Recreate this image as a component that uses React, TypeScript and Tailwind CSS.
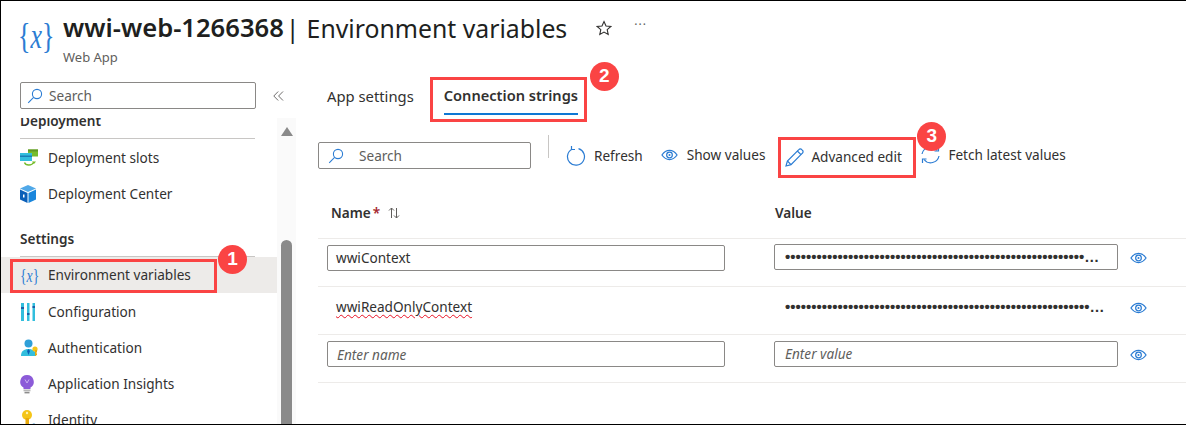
import { ReactNode } from "react";

const blue = "#2b7cd3";

const SearchIcon = () => (
  <svg width="16" height="16" viewBox="0 0 16 16" fill="none" stroke={blue} strokeWidth="1.1">
    <circle cx="10" cy="6" r="4.6" />
    <path d="M6.6 9.4 1.2 14.8" />
  </svg>
);

const EyeIcon = () => (
  <svg width="17" height="12" viewBox="0 0 18 12" fill="none" stroke={blue} strokeWidth="1.3">
    <path d="M1 6c2-3 4.800-4.800 8-4.800S15 3 17 6c-2 3-4.800 4.800-8 4.800S3 9 1 6Z" />
    <circle cx="9" cy="6" r="3" />
    <circle cx="9" cy="6" r="1.100" fill={blue} stroke="none" />
  </svg>
);

const RefreshIcon = () => (
  <svg width="20" height="22" viewBox="0 0 20 22" fill="none" stroke={blue} strokeWidth="1.2">
    <path d="M6 4.200a8.500 8.500 0 1 0 6.500-.6" />
    <path d="M5.500 1v3.500H9" />
  </svg>
);

const PencilIcon = () => (
  <svg width="19" height="19" viewBox="0 0 19 19" fill="none" stroke={blue} strokeWidth="1.2">
    <path d="M1 18l1.400-5L13.800 1.600a2 2 0 0 1 3 0l.6.6a2 2 0 0 1 0 3L6 16.600 1 18Z" />
    <path d="M2.400 13 6 16.600M12.300 3l3.700 3.700" />
  </svg>
);

const SyncIcon = () => (
  <svg width="19" height="18" viewBox="0 0 19 18" fill="none" stroke={blue} strokeWidth="1.2">
    <path d="M1 8a8.500 8.500 0 0 1 15-3.500" />
    <path d="M17.500 1v4h-4" />
    <path d="M18 10a8.500 8.500 0 0 1-15 3.500" />
    <path d="M1.500 17v-4h4" />
  </svg>
);

const SlotsIcon = () => (
  <svg width="18" height="18" viewBox="0 0 18 18">
    <rect x="8" y="0.500" width="10" height="7" fill="#76bc2d" />
    <rect x="8" y="0.500" width="10" height="2" fill="#5e9624" />
    <rect x="0" y="4" width="12" height="8" fill="#32bedd" />
    <rect x="0" y="6.500" width="12" height="1.500" fill="#1a7fb5" />
    <path d="M4.500 13.500c1 3 7 4 9.500-.5" fill="none" stroke="#76bc2d" strokeWidth="1.400" />
    <path d="M12 12.500h4l-2 2.500Z" fill="#76bc2d" />
  </svg>
);

const CubeIcon = () => (
  <svg width="16" height="18" viewBox="0 0 16 18">
    <path d="M8 0 16 3.500 8 7 0 3.500Z" fill="#50a8e8" />
    <path d="M0 4.500 7.500 8v10L0 14.500Z" fill="#0a5fb8" />
    <path d="M16 4.500 8.500 8v10l7.500-3.500Z" fill="#1a86dc" />
    <rect x="3" y="9.500" width="1.500" height="3" fill="#fff" />
  </svg>
);

const ConfigIcon = () => (
  <svg width="16" height="18" viewBox="0 0 16 18">
    <rect x="1" y="0" width="3" height="18" fill="#32bedd" />
    <rect x="1" y="4" width="3" height="2" fill="#1a5fa8" />
    <rect x="7" y="0" width="2.500" height="18" fill="#32bedd" />
    <rect x="7" y="10" width="2.500" height="2" fill="#1a5fa8" />
    <rect x="12.500" y="0" width="2.500" height="18" fill="#32bedd" />
    <rect x="12.500" y="3" width="2.500" height="2" fill="#1a5fa8" />
  </svg>
);

const AuthIcon = () => (
  <svg width="20" height="18" viewBox="0 0 20 18">
    <circle cx="8.500" cy="4.500" r="4" fill="#2f9fd8" />
    <path d="M1 17c0-5 3-7 7.500-7s7.500 2 7.500 7Z" fill="#32bedd" />
    <path d="M8.500 10 7 12l1.500 4 1.500-4Z" fill="#0a5fb8" />
    <circle cx="15" cy="10" r="2.600" fill="#f5c518" />
    <path d="M15 11v6l2-1v-1.500l-1-.5 1-.8V11Z" fill="#e8a90c" />
  </svg>
);

const BulbIcon = () => (
  <svg width="14" height="19" viewBox="0 0 14 19">
    <path d="M7 0a6.800 6.800 0 0 0-3.500 12.600V14h7v-1.400A6.800 6.800 0 0 0 7 0Z" fill="#8c5bd8" />
    <path d="M5 4.500 7 8l2-3.500" fill="none" stroke="#c9b0f0" strokeWidth="1" />
    <rect x="3.500" y="14.500" width="7" height="1.800" fill="#b9b9b9" />
    <rect x="4.500" y="16.800" width="5" height="1.600" fill="#8c8c8c" />
  </svg>
);

const KeyIcon = () => (
  <svg width="18" height="20" viewBox="0 0 18 20">
    <circle cx="7" cy="5" r="5" fill="#f5c518" />
    <circle cx="7" cy="3" r="1.200" fill="#fff2b0" />
    <rect x="5.500" y="8" width="3.500" height="10" fill="#e8a90c" />
    <path d="M9 16l5-3 4 3-4 3Z" fill="#7fb7e0" />
  </svg>
);

const Curly = ({ size }: { size: string }) => (
  <span className={`${size} inline-block origin-left scale-x-[0.72] font-['Liberation_Serif',serif] font-light italic leading-none text-[#2b7cd3] whitespace-nowrap`}>
    <span className="not-italic">{"{"}</span>x<span className="not-italic">{"}"}</span>
  </span>
);

const Badge = ({ n, className }: { n: number; className: string }) => (
  <span className={`absolute z-10 flex h-[29px] w-[29px] items-center justify-center rounded-full bg-[#fa4444] text-[19px] font-bold text-white font-['Liberation_Sans',sans-serif] ${className}`}>
    {n}
  </span>
);

const NavItem = ({ icon, label, children, active }: { icon: ReactNode; label: string; children?: ReactNode; active?: boolean }) => (
  <div className={`relative flex h-9 items-center ${active ? "bg-[#edebe9] pt-px" : ""}`}>
    <div className="flex w-[47px] shrink-0 pl-[19px]">{icon}</div>
    <span className="text-[#323130]">{label}</span>
    {children}
  </div>
);

const ToolButton = ({ icon, label, className }: { icon: ReactNode; label: string; className: string }) => (
  <div className={`flex items-center whitespace-nowrap ${className}`}>
    {icon}
    <span>{label}</span>
  </div>
);

const Cell = ({ children, className }: { children: ReactNode; className: string }) => (
  <div className={`flex h-[26px] items-center overflow-hidden rounded-[2px] border border-[#8a8886] ${className}`}>
    {children}
  </div>
);

const dots = "•".repeat(120);

export default function App() {
  return (
    <div className="flex h-[425px] w-[1186px] flex-col overflow-hidden border-y border-l border-black bg-white text-[13.6px] text-[#323130] font-['Noto_Sans',sans-serif]">
      {/* header */}
      <div className="flex h-[66px] shrink-0 pl-[17px] pt-[11px]">
        <div className="w-[45px] pt-[6px]">
          <Curly size="text-[36px]" />
        </div>
        <div>
          <div className="flex items-center whitespace-nowrap leading-[32px] text-[#201f1e]">
            <span className="text-[25.6px] font-semibold">wwi-web-1266368</span>
            <span className="ml-[2px] text-[25px]">|</span>
            <span className="ml-[7px] text-[24.8px]">Environment variables</span>
            <svg className="ml-[29px]" width="16" height="16" viewBox="0 0 16 16" fill="none" stroke="#323130" strokeWidth="1.100">
              <path d="m8 1.500 2 4.500 4.800.5-3.600 3.200 1 4.800L8 12.100l-4.200 2.400 1-4.800L1.200 6.500 6 6Z" />
            </svg>
            <span className="ml-[22px] mb-[6px] text-[12px] leading-none tracking-[1px] text-[#605e5c]">···</span>
          </div>
          <div className="mt-[5px] text-[13px] leading-[16px] text-[#605e5c]">Web App</div>
        </div>
      </div>

      <div className="flex min-h-0 flex-1">
        {/* sidebar */}
        <div className="flex w-[295px] shrink-0 flex-col">
          <div className="flex items-center pl-[19px] pt-[15px]">
            <div className="flex h-[27px] w-[236px] items-center gap-[6px] rounded-[2px] border border-[#8a8886] pl-[6px] text-[#605e5c]">
              <SearchIcon />
              <span className="mt-[2px]">Search</span>
            </div>
            <svg className="ml-[17px]" width="11" height="10" viewBox="0 0 11 10" fill="none" stroke="#605e5c" strokeWidth="0.900">
              <path d="M5.200.5.800 5l4.400 4.500M10 .5 5.600 5 10 9.500" />
            </svg>
          </div>
          <div className="flex min-h-0 flex-1 pt-[9px]">
            <div className="h-full w-[276px] overflow-hidden">
              <div className="mt-[-7px] pl-[19px] font-semibold">
                <div className="w-[235px] border-b border-[#c8c6c4] pb-[7px] leading-[20px]">Deployment</div>
              </div>
              <div className="mt-px">
                <NavItem icon={<SlotsIcon />} label="Deployment slots" />
                <NavItem icon={<CubeIcon />} label="Deployment Center" />
              </div>
              <div className="ml-[19px] mt-[17px] w-[235px] border-b border-[#c8c6c4] pb-[7px] font-semibold leading-[20px]">Settings</div>
              <NavItem active icon={<Curly size="text-[19px]" />} label="Environment variables">
                <div className="absolute left-[9px] top-[2px] h-[34px] w-[207px] border-[3px] border-[#fa4444]" />
                <Badge n={1} className="left-[217px] top-[-12px]" />
              </NavItem>
              <div className="mt-px">
                <NavItem icon={<ConfigIcon />} label="Configuration" />
                <NavItem icon={<AuthIcon />} label="Authentication" />
                <NavItem icon={<BulbIcon />} label="Application Insights" />
                <NavItem icon={<KeyIcon />} label="Identity" />
              </div>
            </div>
            {/* scrollbar */}
            <div className="flex h-full w-[19px] flex-col items-center bg-[#fafafa]">
              <div className="mt-[9px] h-0 w-0 border-x-[6px] border-b-[9px] border-x-transparent border-b-[#8a8a8a]" />
              <div className="mt-[104px] w-[11px] flex-1 rounded-t-full bg-[#8a8a8a]" />
            </div>
          </div>
        </div>

        {/* main */}
        <div className="min-w-0 flex-1 pl-[22px]">
          <div className="flex pl-[9px] pt-[11px]">
            <div className="flex h-[36px] items-center text-[14.8px] text-[#323130]">App settings</div>
            <div className="relative ml-[30px] flex h-[36px] flex-col items-center justify-center text-[14.6px] font-semibold">
              <span className="whitespace-nowrap">Connection strings</span>
              <div className="absolute bottom-[-1px] left-0 right-0 h-[2px] bg-[#0f78d4]" />
              <div className="absolute left-[-14px] right-[-9px] top-[-1px] h-[45px] border-[3px] border-[#fa4444]" />
              <Badge n={2} className="left-[146px] top-[-16px]" />
            </div>
          </div>
          <div className="mt-[21px] flex items-start">
            <div className="mt-[7px] flex h-[27px] w-[213px] items-center gap-[15px] rounded-[2px] border border-[#8a8886] pl-[9px] text-[#605e5c]">
              <SearchIcon />
              <span className="mt-[2px]">Search</span>
            </div>
            <div className="ml-[17px] h-[23px] w-px bg-[#c8c6c4]" />
            <ToolButton className="ml-[17px] mt-[10px] gap-[8px]" icon={<RefreshIcon />} label="Refresh" />
            <ToolButton className="ml-[18px] mt-[10px] gap-[9px]" icon={<EyeIcon />} label="Show values" />
            <div className="relative ml-[13px] mt-[2px] flex h-[41px] w-[138px] items-center gap-[7px] whitespace-nowrap border-[3px] border-[#fa4444] pl-[4px]">
              <PencilIcon />
              <span>Advanced edit</span>
              <Badge n={3} className="left-[136px] top-[-18px]" />
            </div>
            <ToolButton className="ml-[5px] mt-[10px] gap-[8px]" icon={<SyncIcon />} label="Fetch latest values" />
          </div>

          {/* table */}
          <div className="mt-[17px]">
            <div className="flex h-[44px] items-start border-b border-[#edebe9] pt-[8px] font-semibold">
              <div className="flex w-[457px] items-center pl-[13px]">
                Name<span className="ml-[2px] text-[#a4262c]">*</span>
                <svg className="ml-[8px]" width="12" height="12" viewBox="0 0 12 12" fill="none" stroke="#605e5c" strokeWidth="1">
                  <path d="M3.500 11V1M1 3.500 3.500 1 6 3.500M8.500 1v10M6 8.500 8.500 11 11 8.500" />
                </svg>
              </div>
              <span>Value</span>
            </div>
            <div className="flex h-[48px] items-start border-b border-[#edebe9] pl-[9px]">
              <Cell className="mt-[6px] w-[398px] pl-[8px] pt-px">wwiContext</Cell>
              <Cell className="ml-[49px] mt-[5px] w-[344px] pl-[10px] pr-[14px]">
                <span className="block truncate font-['Liberation_Sans',sans-serif] text-[15px] font-bold">{dots}</span>
              </Cell>
              <div className="ml-[12px] mt-[13px] flex"><EyeIcon /></div>
            </div>
            <div className="flex h-[48px] items-start border-b border-[#edebe9] pl-[9px]">
              <div className="mt-[10px] w-[398px] pl-[9px] leading-[20px]">
                <span className="underline decoration-[#e81123] decoration-wavy decoration-1 underline-offset-2">wwiReadOnlyContext</span>
              </div>
              <div className="ml-[49px] mt-[10px] w-[344px] pl-[11px] pr-[9px] leading-[20px]">
                <span className="block truncate font-['Liberation_Sans',sans-serif] text-[15px] font-bold">{dots}</span>
              </div>
              <div className="ml-[12px] mt-[15px] flex"><EyeIcon /></div>
            </div>
            <div className="flex h-[48px] items-start border-b border-[#edebe9] pl-[9px]">
              <Cell className="mt-[6px] w-[398px] pl-[9px] pt-[2px] italic text-[#605e5c]">Enter name</Cell>
              <Cell className="ml-[49px] mt-[6px] w-[344px] pl-[10px] pt-px italic text-[#605e5c]">Enter value</Cell>
              <div className="ml-[12px] mt-[14px] flex"><EyeIcon /></div>
            </div>
          </div>
        </div>
      </div>
    </div>
  );
}
